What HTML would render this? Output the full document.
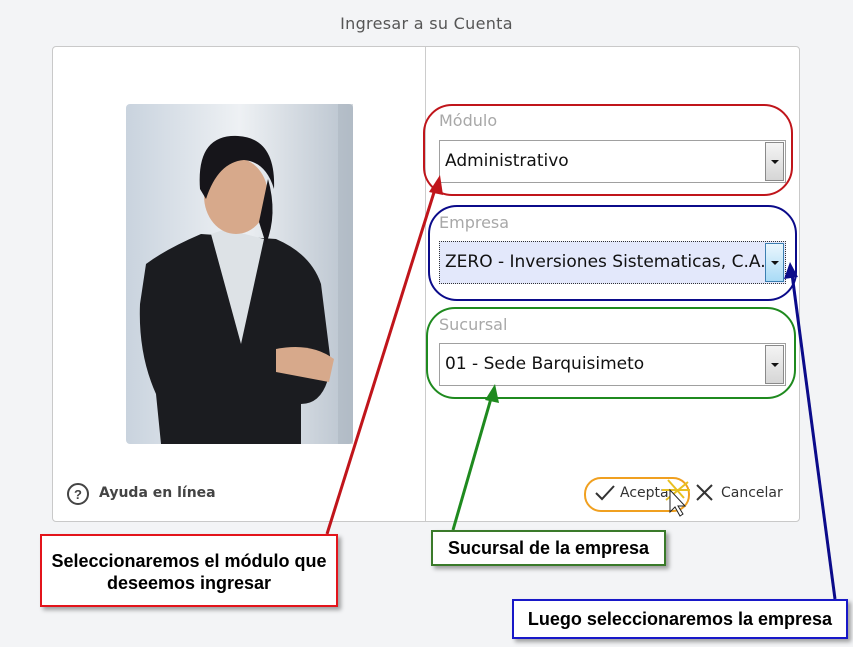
<!DOCTYPE html>
<html><head><meta charset="utf-8"><style>
body{margin:0;width:853px;height:647px;background:#f3f4f6;font-family:"DejaVu Sans","Liberation Sans",sans-serif;position:relative;overflow:hidden}
.a{position:absolute}
.title{left:0;width:853px;top:14px;text-align:center;font-size:16px;color:#555;letter-spacing:.3px}
.panel{left:52px;top:46px;width:746px;height:474px;background:#fff;border:1px solid #c9c9c9;border-radius:4px}
.div{left:425px;top:47px;width:1px;height:474px;background:#ccc}
.lbl{font-size:16px;color:#a8a8a8}
.sel{left:439px;width:347px;height:43px;border:1px solid #a0a0a0;background:#fff;box-sizing:border-box;font-size:17px;color:#111;line-height:41px;padding-left:5px;white-space:nowrap;overflow:hidden}
.btn{position:absolute;right:1px;top:1px;width:19px;height:39px;background:linear-gradient(#f4f4f4,#d6d6d6);border:1px solid #8a8a8a;box-sizing:border-box}
.btn:after{content:"";position:absolute;left:5px;top:17px;border-left:4px solid transparent;border-right:4px solid transparent;border-top:4px solid #111}
.call{background:#fff;font-family:"Liberation Sans",sans-serif;font-weight:bold;font-size:18px;color:#000;text-align:center;box-shadow:3px 3px 4px rgba(0,0,0,.35);box-sizing:border-box;white-space:nowrap}
</style></head><body>
<div class="a title">Ingresar a su Cuenta</div>
<div class="a panel"></div>
<div class="a div"></div>
<svg class="a" style="left:126px;top:104px" width="227" height="340" viewBox="0 0 227 340">
<defs><linearGradient id="bg" x1="0" x2="1"><stop offset="0" stop-color="#c9d3de"/><stop offset=".5" stop-color="#eef1f4"/><stop offset="1" stop-color="#b9c3ce"/></linearGradient></defs>
<rect width="227" height="340" rx="4" fill="url(#bg)"/>
<path d="M20 160 Q40 145 75 130 L150 135 Q185 150 195 180 L205 260 Q200 300 175 300 L175 340 L35 340 L30 290 Q12 250 14 200 Z" fill="#1b1c20"/>
<path d="M100 125 L85 130 L115 240 L138 135 Z" fill="#dde2e6"/>
<ellipse cx="110" cy="92" rx="32" ry="38" fill="#d7a98b"/>
<path d="M74 85 Q70 30 112 32 Q150 34 148 85 Q140 58 118 56 Q92 58 80 95 Z" fill="#16151a"/>
<path d="M142 75 Q152 110 140 140 L133 118 Z" fill="#16151a"/>
<path d="M150 245 Q185 238 208 255 L203 278 L150 268 Z" fill="#d7a98b"/>
<rect x="212" y="0" width="15" height="340" fill="#aab4be" opacity=".5"/>
</svg>
<svg class="a" style="left:66px;top:482px" width="24" height="24"><circle cx="12" cy="12" r="10" fill="none" stroke="#444" stroke-width="2"/><text x="12" y="17" font-size="13" font-weight="bold" text-anchor="middle" fill="#444" font-family="Liberation Sans">?</text></svg>
<div class="a" style="left:99px;top:485px;font-size:14px;font-weight:bold;color:#444">Ayuda en línea</div>

<div class="a lbl" style="left:439px;top:111px">Módulo</div>
<div class="a sel" style="top:140px">Administrativo<div class="btn"></div></div>
<div class="a lbl" style="left:439px;top:213px">Empresa</div>
<div class="a sel" style="top:241px;background:#e3e8fb;border:1px dotted #333">ZERO - Inversiones Sistematicas, C.A.<div class="btn" style="background:linear-gradient(#eaf6fd,#a9dbf6);border-color:#3c7fb1"></div></div>
<div class="a lbl" style="left:439px;top:315px">Sucursal</div>
<div class="a sel" style="top:343px">01 - Sede Barquisimeto<div class="btn"></div></div>

<svg class="a" style="left:594px;top:483px" width="22" height="20"><path d="M2 10 L8 16 L20 3" fill="none" stroke="#333" stroke-width="2"/></svg>
<div class="a" style="left:620px;top:485px;font-size:14px;color:#333">Acepta</div>
<svg class="a" style="left:695px;top:483px" width="20" height="20"><path d="M2 2 L17 17 M17 2 L2 17" stroke="#333" stroke-width="2"/></svg>
<div class="a" style="left:721px;top:485px;font-size:14px;color:#333">Cancelar</div>

<svg class="a" style="left:0;top:0" width="853" height="647">
<rect x="424" y="105" width="368" height="90" rx="28" fill="none" stroke="#c0151b" stroke-width="2"/>
<rect x="429" y="206" width="367" height="94" rx="28" fill="none" stroke="#0b0b8a" stroke-width="2"/>
<rect x="427" y="308" width="368" height="90" rx="28" fill="none" stroke="#1f8a1f" stroke-width="2"/>
<rect x="585" y="478" width="104" height="33" rx="16" fill="none" stroke="#f0a020" stroke-width="2"/>
<path d="M668 480 L684 498 M662 490 L690 490 M666 500 L688 482" stroke="#e8c020" stroke-width="2"/>
<path d="M670 490 L670 512 L675 507 L680 516 L683 514 L678 506 L685 506 Z" fill="#fff" stroke="#222"/>
<line x1="327" y1="534" x2="436" y2="186" stroke="#c0151b" stroke-width="3"/>
<polygon points="440,175 429,192 443,195" fill="#c0151b"/>
<line x1="453" y1="530" x2="492" y2="395" stroke="#1f8a1f" stroke-width="3"/>
<polygon points="495,384 485,400 499,403" fill="#1f8a1f"/>
<line x1="835" y1="599" x2="792" y2="274" stroke="#0b0b8a" stroke-width="3"/>
<polygon points="790,262 784,279 798,277" fill="#0b0b8a"/>
</svg>

<div class="a call" style="left:40px;top:534px;width:298px;height:73px;border:2px solid #e3141b;padding-top:14px;line-height:22px">Seleccionaremos el módulo que<br>deseemos ingresar</div>
<div class="a call" style="left:431px;top:530px;width:235px;height:36px;border:2px solid #3a7a2a;line-height:32px">Sucursal de la empresa</div>
<div class="a call" style="left:512px;top:599px;width:336px;height:40px;border:2px solid #1818c8;line-height:36px">Luego seleccionaremos la empresa</div>
</body></html>
